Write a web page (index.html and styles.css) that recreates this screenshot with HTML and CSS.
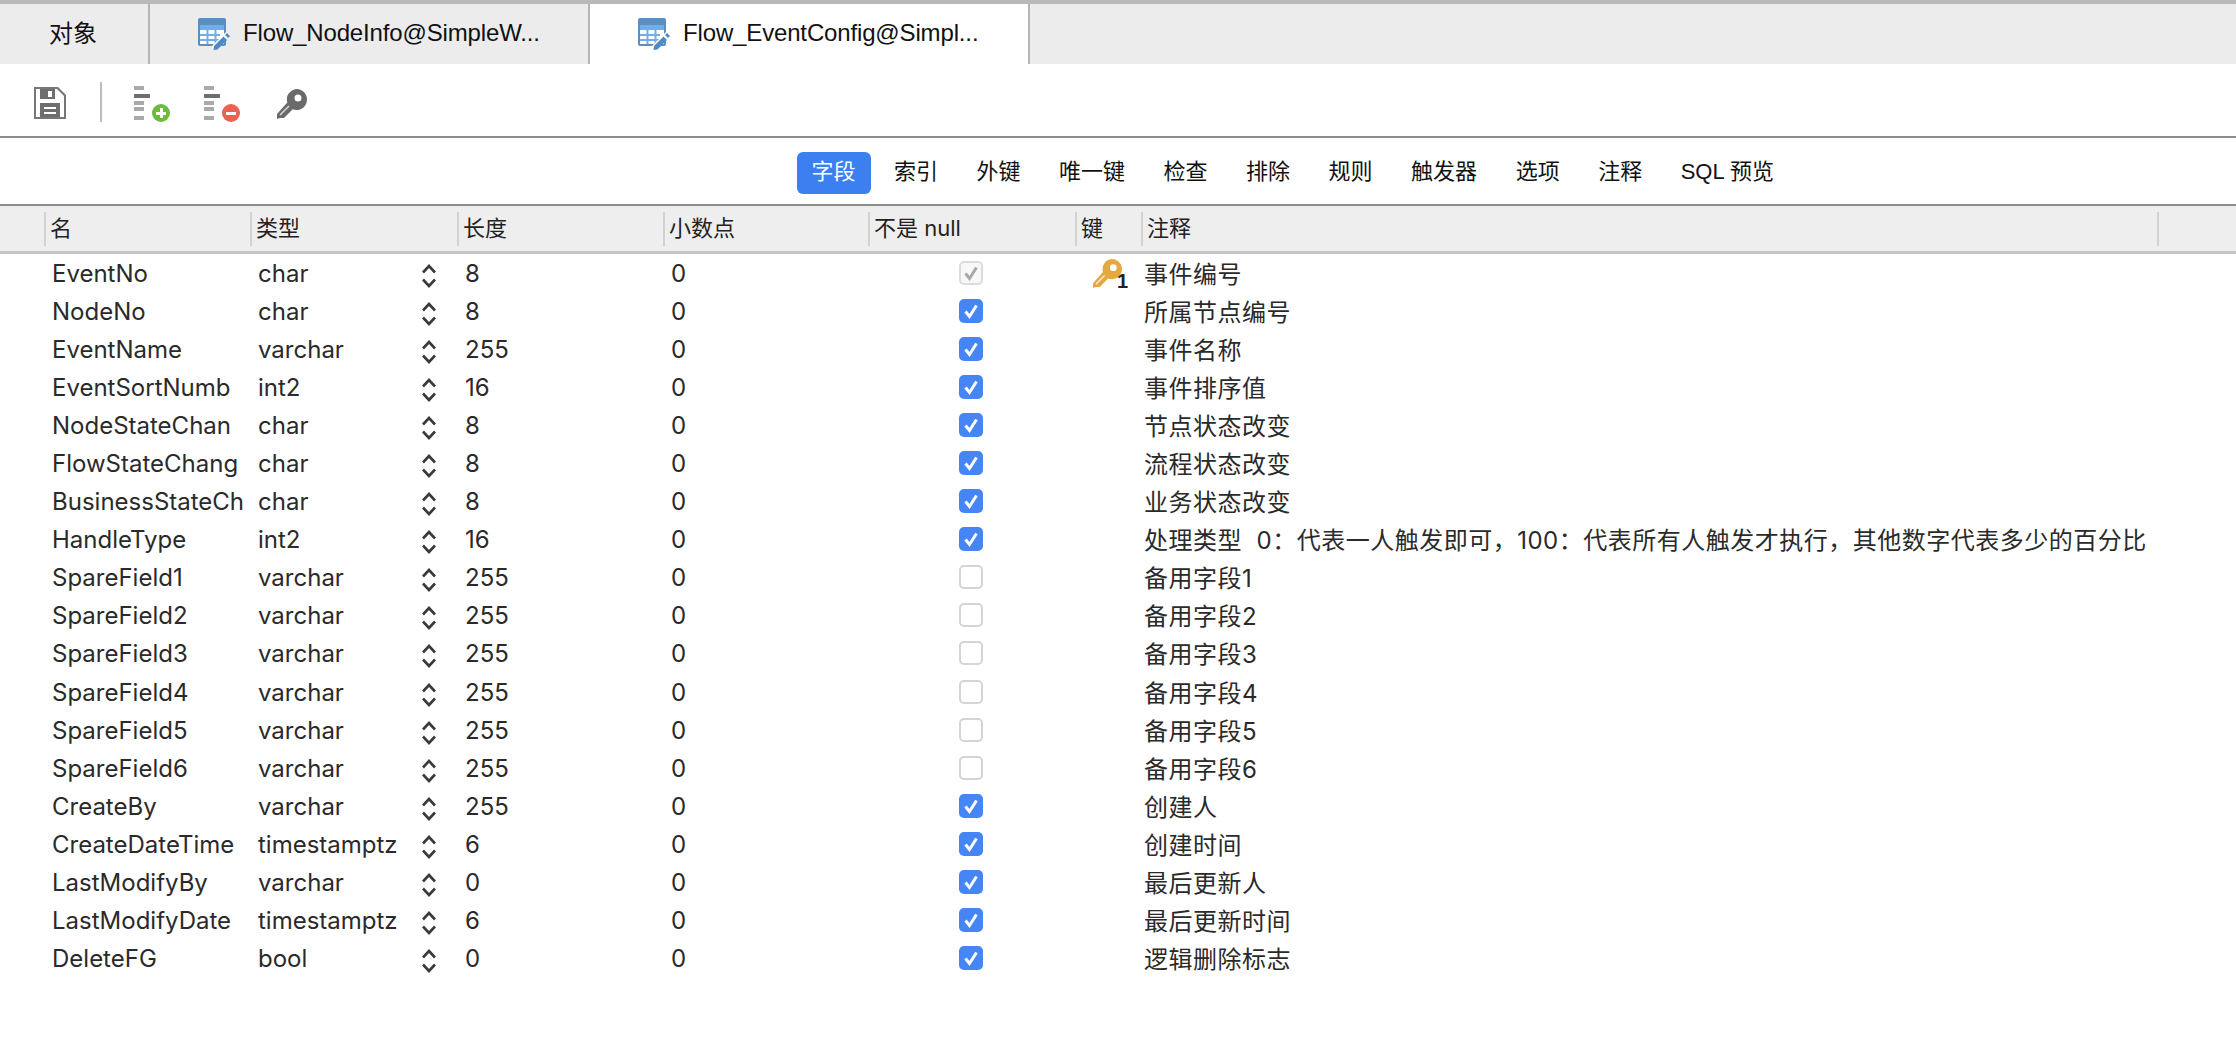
FILE: index.html
```html
<!DOCTYPE html>
<html lang="zh">
<head>
<meta charset="utf-8">
<title>Flow_EventConfig</title>
<link rel="stylesheet" href="styles.css">
</head>
<body>
<svg class="defs" width="0" height="0" aria-hidden="true">
  <symbol id="table" viewBox="0 0 32 32">
    <rect x="0" y="0" width="28" height="28" rx="2" fill="#5a8fc4"/>
    <rect x="2" y="7" width="24" height="19" fill="#fff"/>
    <path d="M2 7h24v5H2z" fill="#72ade8"/>
    <path d="M2 17h20M2 22h20M9.500 7v19M17.500 7v19" stroke="#72ade8" stroke-width="2" fill="none"/>
    <path d="M14 28l14-14 4 3-13 13-5 2z" fill="#fff"/>
    <path d="M16 28l9.500-9.500 3.500 3.500-9.500 9.500-4 .5z" fill="#4e8ac6"/>
    <path d="M27 17l2-2 3 3-2 2z" fill="#4e8ac6"/>
  </symbol>
  <symbol id="save" viewBox="0 0 32 32">
    <path d="M0 0h24l8 8v24H0z" fill="#777"/>
    <path d="M2 2h21l7 7v21H2z" fill="#fff"/>
    <path d="M6 2h15v10H6z" fill="#6e6e6e"/>
    <path d="M14 4h4v6h-4z" fill="#fff"/>
    <path d="M6 16h20v14H6z" fill="#6e6e6e"/>
    <path d="M10 20h12v2H10zM10 25h12v2H10z" fill="#fff"/>
  </symbol>
  <symbol id="lines" viewBox="0 0 16 34">
    <path d="M0 0h10v4H0zM0 15h10v4H0zM0 21h10v4H0zM0 30h10v4H0z" fill="#aaa"/>
    <path d="M0 8h16v4H0z" fill="#6e6e6e"/>
  </symbol>
  <symbol id="key" viewBox="0 0 30 30">
    <path fill-rule="evenodd" d="M19.500 0a10.500 10.500 0 1 1-3.800 20.300L7 29H2.800L0 30v-5L10.300 13.500A10.500 10.500 0 0 1 19.500 0zm1.500 5.500a3.500 3.500 0 1 0 0 7 3.500 3.500 0 0 0 0-7z" fill="currentColor"/>
    <path d="M3 26l9-9" stroke="#fff" stroke-width="1.500" opacity=".75"/>
  </symbol>
  <symbol id="updown" viewBox="0 0 16 26">
    <path d="M2 9.500L8 3l6 6.500M2 16.500L8 23l6-6.500" fill="none" stroke="#3a3a3a" stroke-width="2.600"/>
  </symbol>
  <symbol id="tick" viewBox="0 0 24 24">
    <path d="M6.500 12.500l4 5 7-11" fill="none" stroke="currentColor" stroke-width="3"/>
  </symbol>
</svg>

<div class="app">
  <nav class="tabs">
    <div class="tab tab-object">对象</div>
    <div class="tab tab-doc"><svg class="tab-icon"><use href="#table"/></svg><span>Flow_NodeInfo@SimpleW...</span></div>
    <div class="tab tab-doc tab-active"><svg class="tab-icon"><use href="#table"/></svg><span>Flow_EventConfig@Simpl...</span></div>
  </nav>

  <div class="toolbar">
    <svg class="tool-save"><use href="#save"/></svg>
    <span class="tool-sep"></span>
    <div class="tool-field"><svg class="tool-lines"><use href="#lines"/></svg><span class="badge badge-add"></span></div>
    <div class="tool-field"><svg class="tool-lines"><use href="#lines"/></svg><span class="badge badge-del"></span></div>
    <svg class="tool-key"><use href="#key"/></svg>
  </div>

  <div class="subtabs">
    <span class="subtab subtab-active">字段</span>
    <span class="subtab">索引</span>
    <span class="subtab">外键</span>
    <span class="subtab">唯一键</span>
    <span class="subtab">检查</span>
    <span class="subtab">排除</span>
    <span class="subtab">规则</span>
    <span class="subtab">触发器</span>
    <span class="subtab">选项</span>
    <span class="subtab">注释</span>
    <span class="subtab">SQL 预览</span>
  </div>

  <div class="grid head">
    <span></span>
    <span class="th">名</span><span class="th">类型</span><span class="th">长度</span><span class="th">小数点</span><span class="th">不是 null</span><span class="th">键</span><span class="th">注释</span><span class="th"></span>
  </div>

  <div class="rows">
    <div class="grid row"><span></span><span class="c-name">EventNo</span><span class="c-type">char<svg class="updown"><use href="#updown"/></svg></span><span class="c-num">8</span><span class="c-num">0</span><span class="c-check"><i class="cb cb-lock"><svg><use href="#tick"/></svg></i></span><span class="c-key"><svg class="gold-key"><use href="#key"/></svg><b class="key-no">1</b></span><span class="c-note">事件编号</span></div>
    <div class="grid row"><span></span><span class="c-name">NodeNo</span><span class="c-type">char<svg class="updown"><use href="#updown"/></svg></span><span class="c-num">8</span><span class="c-num">0</span><span class="c-check"><i class="cb cb-on"><svg><use href="#tick"/></svg></i></span><span class="c-key"></span><span class="c-note">所属节点编号</span></div>
    <div class="grid row"><span></span><span class="c-name">EventName</span><span class="c-type">varchar<svg class="updown"><use href="#updown"/></svg></span><span class="c-num">255</span><span class="c-num">0</span><span class="c-check"><i class="cb cb-on"><svg><use href="#tick"/></svg></i></span><span class="c-key"></span><span class="c-note">事件名称</span></div>
    <div class="grid row"><span></span><span class="c-name">EventSortNumb</span><span class="c-type">int2<svg class="updown"><use href="#updown"/></svg></span><span class="c-num">16</span><span class="c-num">0</span><span class="c-check"><i class="cb cb-on"><svg><use href="#tick"/></svg></i></span><span class="c-key"></span><span class="c-note">事件排序值</span></div>
    <div class="grid row"><span></span><span class="c-name">NodeStateChan</span><span class="c-type">char<svg class="updown"><use href="#updown"/></svg></span><span class="c-num">8</span><span class="c-num">0</span><span class="c-check"><i class="cb cb-on"><svg><use href="#tick"/></svg></i></span><span class="c-key"></span><span class="c-note">节点状态改变</span></div>
    <div class="grid row"><span></span><span class="c-name">FlowStateChang</span><span class="c-type">char<svg class="updown"><use href="#updown"/></svg></span><span class="c-num">8</span><span class="c-num">0</span><span class="c-check"><i class="cb cb-on"><svg><use href="#tick"/></svg></i></span><span class="c-key"></span><span class="c-note">流程状态改变</span></div>
    <div class="grid row"><span></span><span class="c-name">BusinessStateCh</span><span class="c-type">char<svg class="updown"><use href="#updown"/></svg></span><span class="c-num">8</span><span class="c-num">0</span><span class="c-check"><i class="cb cb-on"><svg><use href="#tick"/></svg></i></span><span class="c-key"></span><span class="c-note">业务状态改变</span></div>
    <div class="grid row"><span></span><span class="c-name">HandleType</span><span class="c-type">int2<svg class="updown"><use href="#updown"/></svg></span><span class="c-num">16</span><span class="c-num">0</span><span class="c-check"><i class="cb cb-on"><svg><use href="#tick"/></svg></i></span><span class="c-key"></span><span class="c-note">处理类型&nbsp;&nbsp;0：代表一人触发即可，100：代表所有人触发才执行，其他数字代表多少的百分比</span></div>
    <div class="grid row"><span></span><span class="c-name">SpareField1</span><span class="c-type">varchar<svg class="updown"><use href="#updown"/></svg></span><span class="c-num">255</span><span class="c-num">0</span><span class="c-check"><i class="cb cb-off"></i></span><span class="c-key"></span><span class="c-note">备用字段1</span></div>
    <div class="grid row"><span></span><span class="c-name">SpareField2</span><span class="c-type">varchar<svg class="updown"><use href="#updown"/></svg></span><span class="c-num">255</span><span class="c-num">0</span><span class="c-check"><i class="cb cb-off"></i></span><span class="c-key"></span><span class="c-note">备用字段2</span></div>
    <div class="grid row"><span></span><span class="c-name">SpareField3</span><span class="c-type">varchar<svg class="updown"><use href="#updown"/></svg></span><span class="c-num">255</span><span class="c-num">0</span><span class="c-check"><i class="cb cb-off"></i></span><span class="c-key"></span><span class="c-note">备用字段3</span></div>
    <div class="grid row"><span></span><span class="c-name">SpareField4</span><span class="c-type">varchar<svg class="updown"><use href="#updown"/></svg></span><span class="c-num">255</span><span class="c-num">0</span><span class="c-check"><i class="cb cb-off"></i></span><span class="c-key"></span><span class="c-note">备用字段4</span></div>
    <div class="grid row"><span></span><span class="c-name">SpareField5</span><span class="c-type">varchar<svg class="updown"><use href="#updown"/></svg></span><span class="c-num">255</span><span class="c-num">0</span><span class="c-check"><i class="cb cb-off"></i></span><span class="c-key"></span><span class="c-note">备用字段5</span></div>
    <div class="grid row"><span></span><span class="c-name">SpareField6</span><span class="c-type">varchar<svg class="updown"><use href="#updown"/></svg></span><span class="c-num">255</span><span class="c-num">0</span><span class="c-check"><i class="cb cb-off"></i></span><span class="c-key"></span><span class="c-note">备用字段6</span></div>
    <div class="grid row"><span></span><span class="c-name">CreateBy</span><span class="c-type">varchar<svg class="updown"><use href="#updown"/></svg></span><span class="c-num">255</span><span class="c-num">0</span><span class="c-check"><i class="cb cb-on"><svg><use href="#tick"/></svg></i></span><span class="c-key"></span><span class="c-note">创建人</span></div>
    <div class="grid row"><span></span><span class="c-name">CreateDateTime</span><span class="c-type">timestamptz<svg class="updown"><use href="#updown"/></svg></span><span class="c-num">6</span><span class="c-num">0</span><span class="c-check"><i class="cb cb-on"><svg><use href="#tick"/></svg></i></span><span class="c-key"></span><span class="c-note">创建时间</span></div>
    <div class="grid row"><span></span><span class="c-name">LastModifyBy</span><span class="c-type">varchar<svg class="updown"><use href="#updown"/></svg></span><span class="c-num">0</span><span class="c-num">0</span><span class="c-check"><i class="cb cb-on"><svg><use href="#tick"/></svg></i></span><span class="c-key"></span><span class="c-note">最后更新人</span></div>
    <div class="grid row"><span></span><span class="c-name">LastModifyDate</span><span class="c-type">timestamptz<svg class="updown"><use href="#updown"/></svg></span><span class="c-num">6</span><span class="c-num">0</span><span class="c-check"><i class="cb cb-on"><svg><use href="#tick"/></svg></i></span><span class="c-key"></span><span class="c-note">最后更新时间</span></div>
    <div class="grid row"><span></span><span class="c-name">DeleteFG</span><span class="c-type">bool<svg class="updown"><use href="#updown"/></svg></span><span class="c-num">0</span><span class="c-num">0</span><span class="c-check"><i class="cb cb-on"><svg><use href="#tick"/></svg></i></span><span class="c-key"></span><span class="c-note">逻辑删除标志</span></div>
  </div>
</div>
</body>
</html>
```

FILE: styles.css
```css
* { box-sizing: border-box; }
html, body { margin: 0; height: 100%; background: #fff; overflow: hidden; }
body {
  font-family: "Liberation Sans", "Noto Sans CJK SC", sans-serif;
  color: #222;
}
.defs { position: absolute; }

/* Tabs */
.tabs {
  display: flex;
  height: 64px;
  background: #ececec;
  border-top: 4px solid #b9b9b9;
}
.tab {
  display: flex;
  align-items: center;
  height: 60px;
  border-right: 2px solid #b5b5b5;
  font-size: 24px;
  color: #111;
}
.tab-object { width: 150px; justify-content: center; padding-right: 2px; padding-bottom: 5px; }
.tab-doc { width: 440px; padding-left: 48px; gap: 13px; letter-spacing: -.15px; }
.tab-active { background: #fff; }
.tab-doc span { position: relative; top: -1px; }
.tab-icon { width: 32px; height: 32px; }

/* Toolbar */
.toolbar {
  display: flex;
  align-items: center;
  height: 74px;
  padding: 8px 0 0 34px;
  border-bottom: 2px solid #8c8c8c;
}
.tool-save { width: 32px; height: 32px; margin-top: -2px; }
.tool-sep { width: 2px; height: 40px; background: #bdbdbd; margin: -4px 32px 0 34px; }
.tool-field { position: relative; width: 36px; height: 36px; margin-right: 34px; }
.tool-lines { display: block; width: 16px; height: 34px; }
.badge {
  position: absolute;
  right: 0;
  bottom: 0;
  width: 18px;
  height: 18px;
  border-radius: 50%;
}
.badge::before {
  content: "";
  position: absolute;
  left: 4px;
  right: 4px;
  top: 7.500px;
  height: 3px;
  background: #fff;
}
.badge-add { background: #6cbb3c; }
.badge-add::after {
  content: "";
  position: absolute;
  top: 4px;
  bottom: 4px;
  left: 7.500px;
  width: 3px;
  background: #fff;
}
.badge-del { background: #ea6352; }
.tool-key { width: 30px; height: 30px; color: #6a6a6a; margin-left: 3px; }

/* Sub tabs */
.subtabs {
  display: flex;
  align-items: center;
  gap: 9px;
  height: 68px;
  padding: 3px 0 0 797px;
  border-bottom: 2px solid #8c8c8c;
}
.subtab {
  padding: 0 15px 0 14.500px;
  height: 42px;
  line-height: 40px;
  font-size: 22px;
  color: #111;
  border-radius: 6px;
}
.subtab-active { background: #3b7ff0; color: #fff; }

/* Table */
.grid {
  display: grid;
  grid-template-columns: 44px 206px 207px 206px 205px 207px 66px 1016px 79px;
}
.head {
  height: 48px;
  padding-top: 6px;
  background: #eee;
  border-bottom: 3px solid #c6c6c6;
}
.th {
  height: 34px;
  padding-left: 4px;
  border-left: 2px solid #d2d2d2;
  font-family: Inter, "Noto Sans CJK SC", sans-serif;
  font-size: 22px;
  line-height: 32px;
  color: #222;
}
.row {
  height: 38.050px;
  font-family: Inter, "Noto Sans CJK SC", sans-serif;
  font-size: 24px;
  line-height: 40px;
  color: #2a2a2a;
}
.row > span { white-space: nowrap; }
.c-name { padding-left: 8px; overflow: hidden; height: 38px; }
.c-type { position: relative; padding-left: 8px; }
.c-num { padding-left: 8px; }
.c-note { padding-left: 3px; padding-top: 1px; letter-spacing: .5px; }
.updown {
  position: absolute;
  left: 171px;
  top: 9px;
  width: 16px;
  height: 26px;
}
.c-check { position: relative; }
.cb {
  position: absolute;
  left: 91px;
  top: 7px;
  width: 24px;
  height: 24px;
  border-radius: 5px;
}
.cb svg { display: block; width: 24px; height: 24px; }
.cb-on { background: #4585f5; color: #fff; }
.cb-off { background: #fff; border: 2px solid #d4d4d4; }
.cb-lock { background: #f8f8f8; border: 2px solid #dcdcdc; color: #a8a8a8; }
.cb-lock svg { margin: -2px; }
.c-key { position: relative; }
.gold-key {
  position: absolute;
  left: 18px;
  top: 5px;
  width: 29px;
  height: 29px;
  color: #e5a93f;
}
.key-no {
  position: absolute;
  left: 42px;
  top: 11px;
  font-family: "Liberation Sans", sans-serif;
  font-size: 20px;
  line-height: 32px;
  color: #222;
}
```
